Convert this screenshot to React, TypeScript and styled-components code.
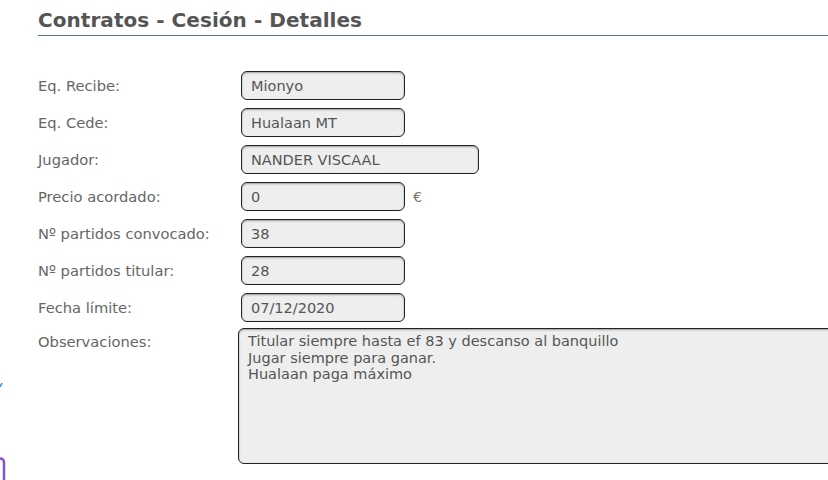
import React from 'react';
import styled, { createGlobalStyle } from 'styled-components';

const GlobalStyle = createGlobalStyle`
    html, body {
        margin: 0;
        padding: 0;
        background: #ffffff;
        overflow: hidden;
    }
    body {
        font-family: 'DejaVu Sans', Verdana, sans-serif;
    }
`;

const Page = styled.div`
    position: relative;
    width: 828px;
    height: 480px;
    padding: 8px 0 0 38px;
    box-sizing: border-box;
    overflow: hidden;
`;

const Title = styled.h1`
    margin: 0;
    padding: 0 0 3px 0;
    font-size: 20px;
    font-weight: 700;
    color: #555555;
    line-height: 24px;
    border-bottom: 1px solid #5b7395;
    letter-spacing: 0.05px;
`;

const Form = styled.div`
    display: flex;
    flex-direction: column;
    gap: 8px;
    margin-top: 35px;
`;

const Row = styled.div<{ $top?: boolean }>`
    display: flex;
    align-items: ${(p) => (p.$top ? 'flex-start' : 'center')};
`;

const Label = styled.div<{ $top?: boolean }>`
    width: 203px;
    flex: none;
    font-size: 14.7px;
    color: #666666;
    padding-top: ${(p) => (p.$top ? '3px' : '0')};
`;

const Field = styled.input<{ $w: number }>`
    width: ${(p) => p.$w}px;
    height: 29px;
    flex: none;
    box-sizing: border-box;
    border: 1px solid #222222;
    border-radius: 6px;
    background: #eeeeee;
    box-shadow: inset 0 1px 2px rgba(0, 0, 0, 0.35);
    padding: 0 9px;
    font-family: 'DejaVu Sans', Verdana, sans-serif;
    font-size: 14.5px;
    color: #555555;
    outline: none;
`;

const Unit = styled.span`
    margin-left: 8px;
    font-size: 14.5px;
    color: #777777;
`;

const Notes = styled.textarea`
    width: 700px;
    height: 136px;
    flex: none;
    margin: -2px 0 0 -3px;
    box-sizing: border-box;
    border: 1px solid #222222;
    border-radius: 6px;
    background: #eeeeee;
    box-shadow: inset 0 1px 2px rgba(0, 0, 0, 0.35);
    padding: 4px 9px;
    font-family: 'DejaVu Sans', Verdana, sans-serif;
    font-size: 14.5px;
    line-height: 16.5px;
    color: #555555;
    resize: none;
    outline: none;
    overflow: hidden;
`;

const EdgeMark = styled.svg`
    position: absolute;
    left: 0;
`;

const fields = [
    { label: 'Eq. Recibe:', value: 'Mionyo', w: 164 },
    { label: 'Eq. Cede:', value: 'Hualaan MT', w: 164 },
    { label: 'Jugador:', value: 'NANDER VISCAAL', w: 238 },
    { label: 'Precio acordado:', value: '0', w: 164, unit: '€' },
    { label: 'Nº partidos convocado:', value: '38', w: 164 },
    { label: 'Nº partidos titular:', value: '28', w: 164 },
    { label: 'Fecha límite:', value: '07/12/2020', w: 164 },
];

const notes = 'Titular siempre hasta ef 83 y descanso al banquillo\nJugar siempre para ganar.\nHualaan paga máximo';

const App = () => {
    return (
        <>
            <GlobalStyle />
            <Page>
                <Title>Contratos - Cesión - Detalles</Title>
                <Form>
                    {fields.map((f) => (
                        <Row key={f.label}>
                            <Label>{f.label}</Label>
                            <Field $w={f.w} value={f.value} readOnly />
                            {f.unit && <Unit>{f.unit}</Unit>}
                        </Row>
                    ))}
                    <Row $top>
                        <Label $top>Observaciones:</Label>
                        <Notes value={notes} readOnly />
                    </Row>
                </Form>

                {/* bits of something cut off at the left edge */}
                <EdgeMark style={{ top: 382 }} width="4" height="6" viewBox="0 0 4 6">
                    <path d="M0 5 L2 1" stroke="#4a86c5" strokeWidth="1.5" fill="none" />
                </EdgeMark>
                <EdgeMark style={{ top: 457 }} width="8" height="23" viewBox="0 0 8 23">
                    <path d="M0 1.5 Q4 1.5 4 6 L4 23" stroke="#8a4fc9" strokeWidth="2.5" fill="none" />
                </EdgeMark>
            </Page>
        </>
    );
};

export default App;
